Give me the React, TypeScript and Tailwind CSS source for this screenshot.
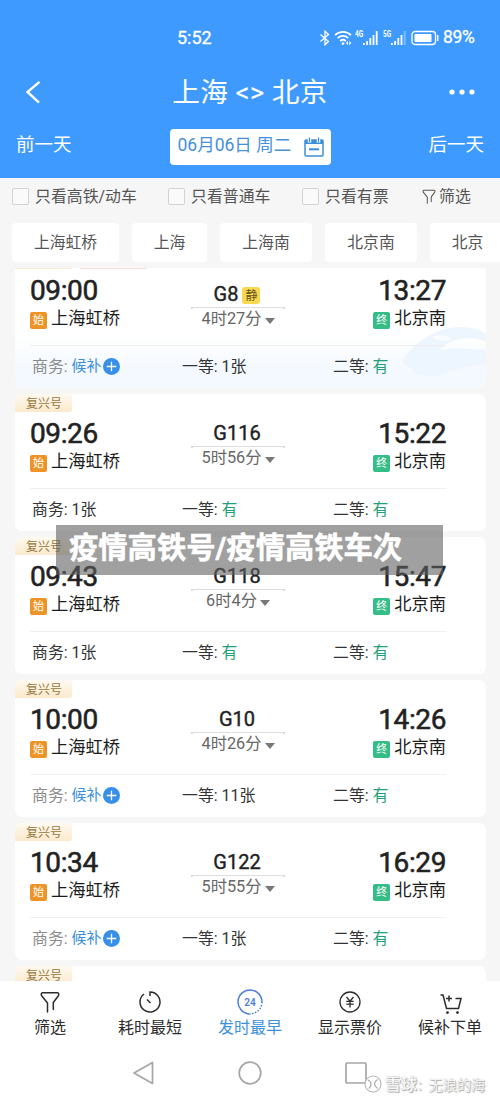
import type { ReactNode } from "react";

type Seat = { label: string; value: string };

type Train = {
  code: string;
  depart: string;
  arrive: string;
  duration: string;
  quiet?: boolean;
  seats: Seat[];
};

const TRAINS: Train[] = [
  {
    code: "G8",
    depart: "09:00",
    arrive: "13:27",
    duration: "4时27分",
    quiet: true,
    seats: [
      { label: "商务", value: "候补" },
      { label: "一等", value: "1张" },
      { label: "二等", value: "有" },
    ],
  },
  {
    code: "G116",
    depart: "09:26",
    arrive: "15:22",
    duration: "5时56分",
    seats: [
      { label: "商务", value: "1张" },
      { label: "一等", value: "有" },
      { label: "二等", value: "有" },
    ],
  },
  {
    code: "G118",
    depart: "09:43",
    arrive: "15:47",
    duration: "6时4分",
    seats: [
      { label: "商务", value: "1张" },
      { label: "一等", value: "有" },
      { label: "二等", value: "有" },
    ],
  },
  {
    code: "G10",
    depart: "10:00",
    arrive: "14:26",
    duration: "4时26分",
    seats: [
      { label: "商务", value: "候补" },
      { label: "一等", value: "11张" },
      { label: "二等", value: "有" },
    ],
  },
  {
    code: "G122",
    depart: "10:34",
    arrive: "16:29",
    duration: "5时55分",
    seats: [
      { label: "商务", value: "候补" },
      { label: "一等", value: "1张" },
      { label: "二等", value: "有" },
    ],
  },
];

const STATIONS = [
  { name: "上海虹桥", width: "w-[107px]" },
  { name: "上海", width: "w-[75px]" },
  { name: "上海南", width: "w-[92px]" },
  { name: "北京南", width: "w-[92px]" },
  { name: "北京", width: "w-[75px]" },
];

function Funnel({ className }: { className: string }) {
  return (
    <svg
      viewBox="0 0 20 22"
      className={className}
      fill="none"
      stroke="currentColor"
      strokeWidth="1.5"
      strokeLinejoin="round"
      strokeLinecap="round"
    >
      <path d="M7.5 21V12L1.8 5C.8 3.4 1.2 1.8 2.5 1.8H17.5C18.8 1.8 19.2 3.4 18.2 5L13.3 11.5V18.5" />
    </svg>
  );
}

function Signal({ label, faded }: { label: string; faded?: boolean }) {
  return (
    <svg viewBox="0 0 25 16" className="h-4 w-[25px] shrink-0" fill="white">
      <text
        x="0"
        y="6.8"
        fontSize="8.8"
        fontWeight="700"
        textLength="8.2"
        lengthAdjust="spacingAndGlyphs"
      >
        {label}
      </text>
      <rect x="8" y="13" width="1.8" height="2" />
      <rect x="11.2" y="11" width="1.8" height="4" />
      <rect x="14.4" y="8" width="1.8" height="7" />
      <rect x="17.6" y="5" width="1.8" height="10" />
      <rect x="20.8" y="1" width="1.8" height="14" opacity={faded ? 0.35 : 1} />
    </svg>
  );
}

function StatusBar() {
  return (
    <div className="flex h-[60px] items-center pt-[15px] pl-[177px] pr-[20px] text-white [-webkit-text-stroke:0.3px]">
      <span className="w-[140px] text-[18px]">5:52</span>
      <svg
        viewBox="0 0 12 16"
        className="ml-[2px] h-4 w-3 shrink-0"
        fill="none"
        stroke="white"
        strokeWidth="1.3"
      >
        <path d="M1.5 4.5L9.5 11.5L6 14.8V1.2L9.5 4.5L1.5 11.5" />
      </svg>
      <svg
        viewBox="0 0 18 16"
        className="ml-[3px] h-4 w-[18px] shrink-0"
        fill="none"
        stroke="white"
        strokeWidth="1.7"
      >
        <path d="M1 5.2C5.5 .8 12.5 .8 17 5.2M3.7 8.2C6.8 5.2 11.2 5.2 14.3 8.2M6.2 11C8 9.4 10 9.4 11.8 11" />
        <circle cx="9" cy="13.6" r="1.4" fill="white" stroke="none" />
        <path d="M14 10.8v4.4L12 13zM15.3 10.8v4.4L17.3 13z" fill="white" stroke="none" />
      </svg>
      <span className="ml-[3px] flex gap-[3px]">
        <Signal label="4G" />
        <Signal label="5G" faded />
      </span>
      <svg
        viewBox="0 0 28 16"
        className="ml-[3px] h-4 w-7 shrink-0"
        fill="none"
        stroke="white"
      >
        <rect x="1" y="1.5" width="23.5" height="13" rx="3" strokeWidth="1.3" />
        <rect x="3.5" y="4" width="17" height="8" rx="1" fill="white" stroke="none" />
        <path d="M26.7 5v6" strokeWidth="1.5" />
      </svg>
      <span className="ml-[4px] text-[17.5px] tracking-[-0.3px]">89%</span>
    </div>
  );
}

function Header() {
  return (
    <header className="h-[178px] bg-[#3e9aff] text-white">
      <StatusBar />
      <div className="flex h-[64px] items-center justify-between pl-[25px] pr-[25px]">
        <svg
          viewBox="0 0 16 24"
          className="h-6 w-4"
          fill="none"
          stroke="white"
          strokeWidth="2.4"
        >
          <path d="M14.5 1.8L2.5 12L14 22.6" />
        </svg>
        <h1 className="ml-[10px] whitespace-pre pt-[2px] text-[27.7px] font-normal leading-none tracking-[0.3px]">
          上海 &lt;&gt; 北京
        </h1>
        <svg viewBox="0 0 26 6" className="h-[6px] w-[26px]" fill="white">
          <circle cx="3" cy="3" r="2.6" />
          <circle cx="13" cy="3" r="2.6" />
          <circle cx="23" cy="3" r="2.6" />
        </svg>
      </div>
      <div className="flex items-center justify-between pl-4 pr-4 pt-[5px]">
        <span className="w-[64px] pb-[4px] text-[18.5px] leading-8">前一天</span>
        <div className="flex h-9 w-[161px] items-center justify-between rounded-[4px] bg-white pl-2 pr-[7px] text-[#4590da]">
          <span className="whitespace-pre pb-[2px] text-[17.5px] leading-none">
            06月06日 周二
          </span>
          <svg
            viewBox="0 0 20 20"
            className="h-5 w-5"
            fill="none"
            stroke="#3f8fd8"
            strokeWidth="1.5"
          >
            <rect x="1" y="3" width="18" height="16" rx="1" />
            <path d="M1 5h18" strokeWidth="4" />
            <path d="M5.5 .5v5M14.5 .5v5" stroke="white" strokeWidth="3.5" />
            <path d="M5.5 .5v4.5M14.5 .5v4.5" strokeWidth="1.3" />
            <path d="M5 12.3h10" strokeWidth="2" />
          </svg>
        </div>
        <span className="w-[64px] pb-[4px] text-right text-[18.5px] leading-8">后一天</span>
      </div>
    </header>
  );
}

function CheckItem({ children }: { children: ReactNode }) {
  return (
    <label className="flex items-center gap-[6px]">
      <span className="h-[17px] w-[17px] rounded-[2px] border border-[#d2d2d2] bg-[#fafafa]" />
      {children}
    </label>
  );
}

function Filters() {
  return (
    <div className="h-[90px] overflow-hidden text-[#555]">
      <div className="grid h-[38px] grid-cols-[156px_134px_120px_auto] items-center pl-3 text-[15.9px]">
        <CheckItem>只看高铁/动车</CheckItem>
        <CheckItem>只看普通车</CheckItem>
        <CheckItem>只看有票</CheckItem>
        <span className="flex items-center gap-[3px]">
          <Funnel className="h-[15px] w-[14px]" />
          筛选
        </span>
      </div>
      <div className="mt-[7px] flex gap-[13px] pl-3 text-[15.8px]">
        {STATIONS.map((s) => (
          <div
            key={s.name}
            className={`${s.width} flex h-[39px] shrink-0 items-center justify-center rounded-[4px] bg-white`}
          >
            {s.name}
          </div>
        ))}
      </div>
    </div>
  );
}

function SeatCell({ seat }: { seat: Seat }) {
  if (seat.value === "候补") {
    return (
      <span className="flex items-center whitespace-pre text-[#8b8b8b]">
        {seat.label}: <span className="text-[15px] text-[#3a8fdc]">候补</span>
        <svg viewBox="0 0 16 16" className="ml-px h-[17px] w-[17px]">
          <circle cx="8" cy="8" r="8" fill="#388fe8" />
          <path d="M3.5 8h9M8 3.5v9" stroke="white" strokeWidth="1.2" />
        </svg>
      </span>
    );
  }
  return (
    <span className="whitespace-pre">
      {seat.label}:{" "}
      <span className={seat.value === "有" ? "text-[#1fa078]" : ""}>{seat.value}</span>
    </span>
  );
}

function StationName({ mark, color, name }: { mark: string; color: string; name: string }) {
  return (
    <span className="flex h-6 items-center gap-1 text-[17.3px] leading-none text-[#1c1c1c]">
      <span
        className={`${color} mt-[3px] flex h-[17px] w-[17px] items-center justify-center rounded-[2px] text-[11px] text-white`}
      >
        {mark}
      </span>
      {name}
    </span>
  );
}

function TrainTag() {
  return (
    <div className="h-[18px] w-[57px] rounded-tl-[7px] rounded-br-[3px] bg-linear-to-b from-[#fffaf0] to-[#fbe9cd] pl-[11px] text-[12px] leading-[20px] text-[#96783c]">
      复兴号
    </div>
  );
}

function TrainCard({ train }: { train: Train }) {
  return (
    <article
      className={`relative h-[137px] shrink-0 overflow-hidden rounded-[7px] ${
        train.quiet ? "bg-linear-to-b from-white from-62% to-[#f4f9ff] to-85%" : "bg-white"
      }`}
    >
      {train.quiet && (
        <svg viewBox="0 0 84 54" className="absolute right-0 bottom-[9px] h-[54px] w-[84px]">
          <path
            d="M2 34C12 17 36 2 58 2C70 2 80 5 84 9V17C76 13 66 12 58 14C48 17 41 20 37 26C52 22 70 24 84 25V38C63 42 45 46 35 51C20 51 9 49 10 43C1 41 0 37 2 34Z"
            fill="#edf5fe"
          />
          <path d="M30 12C39 8 46 11 50 14C44 17 36 17 30 12Z" fill="#f8fcff" />
        </svg>
      )}
      {train.quiet ? (
        <div className="flex h-[18px] gap-2">
          <span className="w-[57px] bg-[#fcebcf]" />
          <span className="w-[67px] bg-[#fbe0d8]" />
        </div>
      ) : (
        <TrainTag />
      )}
      <div className="relative ml-[15px] mr-10 flex h-[77px] justify-between border-b border-[#efefef] pt-2">
        <div className="w-[110px] shrink-0">
          <div className="text-[28px] leading-7 tracking-[-0.4px] text-[#222] [-webkit-text-stroke:0.55px]">
            {train.depart}
          </div>
          <div className="mt-[2px]">
            <StationName mark="始" color="bg-[#ee9427]" name="上海虹桥" />
          </div>
        </div>
        <div
          className={`flex w-[94px] shrink-0 flex-col items-center ${train.quiet ? "pt-[5px]" : "pt-px"}`}
        >
          <div className="flex h-6 items-center gap-1 pr-[2px] text-[20px] leading-none text-[#222] [-webkit-text-stroke:0.4px]">
            {train.code}
            {train.quiet && (
              <span className="mt-[3px] flex h-[17px] w-[18px] items-center justify-center rounded-[3px] bg-[#f8d94f] text-[12px] text-[#665325] [-webkit-text-stroke:0]">
                静
              </span>
            )}
          </div>
          <div className="flex h-[3px] w-full items-center">
            <span className="h-[2px] w-[2px] rounded-full bg-[#cfcfcf]" />
            <span className="h-px flex-1 bg-[#dedede]" />
            <span className="h-[2px] w-[2px] rounded-full bg-[#cfcfcf]" />
          </div>
          <div className="flex h-5 items-center gap-[3px] text-[16.3px] leading-none text-[#666]">
            {train.duration}
            <svg viewBox="0 0 10 6" className="mt-[4px] h-[6px] w-[10px]" fill="#777">
              <path d="M0 0h10L5 6z" />
            </svg>
          </div>
        </div>
        <div className="flex w-[110px] shrink-0 flex-col items-end">
          <div className="text-[28px] leading-7 tracking-[-0.4px] text-[#222] [-webkit-text-stroke:0.55px]">
            {train.arrive}
          </div>
          <div className="mt-[2px]">
            <StationName mark="终" color="bg-[#35bd88]" name="北京南" />
          </div>
        </div>
      </div>
      <div className="relative grid h-[41px] grid-cols-[150px_151px_1fr] items-center pl-[17px] text-[15.9px] text-[#333]">
        {train.seats.map((seat) => (
          <SeatCell key={seat.label} seat={seat} />
        ))}
      </div>
    </article>
  );
}

function TabBar() {
  const tabs = [
    { label: "筛选", icon: <Funnel className="h-[22px] w-5" /> },
    {
      label: "耗时最短",
      icon: (
        <svg viewBox="0 0 24 24" className="h-6 w-6" fill="none" stroke="currentColor" strokeWidth="1.5">
          <path d="M12 6V2A10 10 0 1 1 6 4M9 9.5l3.5 3.5" />
        </svg>
      ),
    },
    {
      label: "发时最早",
      active: true,
      icon: (
        <svg viewBox="0 0 26 26" className="h-[26px] w-[26px]" fill="none" stroke="#4d7fd8" strokeWidth="1.5">
          <path d="M12 24.9A12 12 0 1 1 25 13" />
          <path d="M25 13A12 12 0 0 1 12 24.9" strokeDasharray="1.5 1.5" />
          <text x="13" y="16.7" textAnchor="middle" fontSize="10" fontWeight="600" fill="#4d7fd8" stroke="none">
            24
          </text>
        </svg>
      ),
    },
    {
      label: "显示票价",
      icon: (
        <svg viewBox="0 0 24 24" className="h-6 w-6" fill="none" stroke="currentColor" strokeWidth="1.3">
          <circle cx="12" cy="12" r="10" />
          <path d="M8.5 7L12 11.2L15.5 7M12 11.2V17.5M8.3 11.4h7.4M8.3 14.2h7.4" />
        </svg>
      ),
    },
    {
      label: "候补下单",
      icon: (
        <svg viewBox="0 0 24 24" className="mt-[3px] ml-[2px] h-6 w-6" fill="none" stroke="currentColor" strokeWidth="1.5">
          <path d="M1.5 3H4L7.5 16.5H19.5L22 6.5H16.5M10 3.5v6M7 6.5h6" />
          <circle cx="8.5" cy="20.6" r="1.4" fill="currentColor" stroke="none" />
          <circle cx="18.5" cy="20.6" r="1.4" fill="currentColor" stroke="none" />
        </svg>
      ),
    },
  ];

  return (
    <nav className="flex h-[64px] pt-[7px]">
      {tabs.map((tab) => (
        <div
          key={tab.label}
          className={`flex flex-1 flex-col items-center text-[16px] leading-none ${
            tab.active ? "text-[#3e8fdb]" : "text-[#2c2c2c]"
          }`}
        >
          <span className="flex h-[28px] items-center">{tab.icon}</span>
          <span className="mt-[4px]">{tab.label}</span>
        </div>
      ))}
    </nav>
  );
}

function SystemNav() {
  return (
    <div className="flex h-[55px] items-center justify-between pl-[132px] pr-[132px]">
      <svg viewBox="0 0 24 24" className="h-6 w-6" fill="none" stroke="#a6a6a6" strokeWidth="1.7" strokeLinejoin="round">
        <path d="M20.5 1.5V22.5L2 12Z" />
      </svg>
      <svg viewBox="0 0 24 24" className="h-6 w-6" fill="none" stroke="#a6a6a6" strokeWidth="1.7">
        <circle cx="12" cy="12" r="10.8" />
      </svg>
      <svg viewBox="0 0 24 24" className="h-6 w-6" fill="none" stroke="#a6a6a6" strokeWidth="1.7">
        <rect x="2" y="2" width="20" height="20" rx="1" />
      </svg>
    </div>
  );
}

export default function App() {
  return (
    <div className="relative flex h-[1100px] w-[500px] flex-col overflow-hidden bg-[#f6f6f6] font-['Roboto','Noto_Sans_CJK_SC',sans-serif]">
      <Header />
      <Filters />
      <main className="h-[713px] overflow-hidden pl-[15px] pr-[14px]">
        <div className="-mt-[17px] flex flex-col gap-[6px]">
          {TRAINS.map((train) => (
            <TrainCard key={train.code} train={train} />
          ))}
          <article className="h-10 rounded-t-[7px] bg-white">
            <TrainTag />
          </article>
        </div>
      </main>
      <footer className="h-[119px] bg-white">
        <TabBar />
        <SystemNav />
      </footer>

      {/* Caption strip over the list */}
      <div className="absolute top-[525px] left-[56px] h-[50px] w-[387px] whitespace-nowrap bg-[#606060]/60 pl-[13px] text-[29.3px] font-bold leading-[47px] text-white [-webkit-text-stroke:0.5px]">
        疫情高铁号/疫情高铁车次
      </div>

      {/* Watermark */}
      <div className="absolute top-[1074px] left-[364px] flex h-5 items-center gap-[3px] whitespace-nowrap text-[14.2px] text-[#f4f4f4] [text-shadow:1px_1px_1px_#aaa,0_0_1px_#aaa]">
        <svg viewBox="0 0 18 18" className="h-[18px] w-[18px]" fill="none">
          <circle cx="9" cy="9" r="8" fill="white" stroke="#b5b5b5" strokeWidth="1.1" />
          <path d="M4 5C7 6.5 8.5 9.5 5 13.5M13.5 4.5C9.5 7 9.5 10.5 13.5 13.5" stroke="#aaa" strokeWidth="1.3" />
        </svg>
        <span className="pt-px">
          <span className="text-[16px] font-bold">雪球</span>
          <span className="text-[11.5px]">：</span>无浪的海
        </span>
      </div>
    </div>
  );
}
